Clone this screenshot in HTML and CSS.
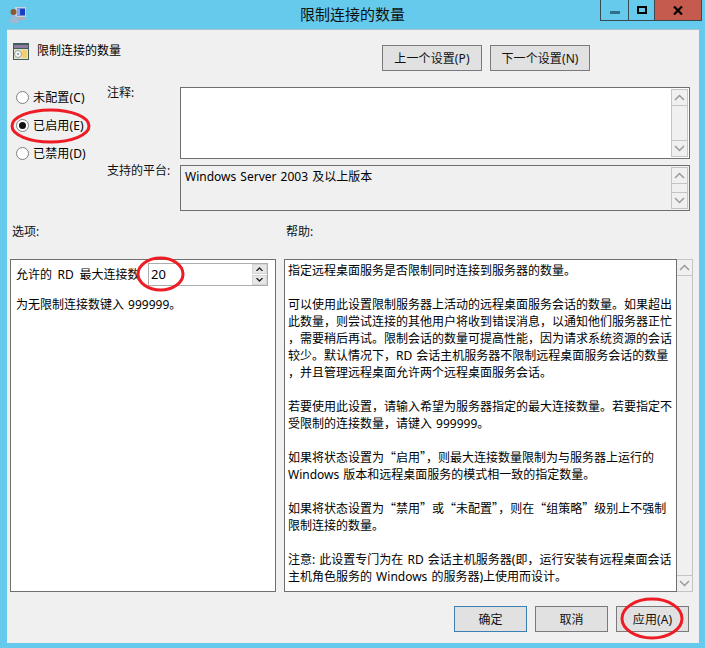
FILE: index.html
```html
<!DOCTYPE html>
<html lang="zh-CN">
<head>
<meta charset="utf-8">
<title>限制连接的数量</title>
<link rel="stylesheet" href="styles.css">
</head>
<body>
<div class="window">
  <header class="titlebar">
    <svg class="app-icon" width="18" height="18" viewBox="0 0 18 18">
      <rect x="6" y="1" width="11" height="10" fill="#c9d3de"/>
      <rect x="8" y="2.500" width="8" height="7" fill="#1b3fc4"/>
      <rect x="8" y="2.500" width="3" height="7" fill="#7fa6ee"/>
      <path d="M9 11h7l1 3H9z" fill="#a7b1b8"/>
      <circle cx="4.500" cy="6" r="3" fill="#8a5a2c"/>
      <path d="M1 17c0-6 2-8 4-8s4 2 5 8z" fill="#9fb8d6"/>
    </svg>
    <h1 class="window-title">限制连接的数量</h1>
    <div class="caption-buttons">
      <div class="cap cap-min"><span class="min-glyph"></span></div>
      <div class="cap cap-max"><span class="max-glyph"></span></div>
      <div class="cap cap-close">
        <svg width="10" height="9" viewBox="0 0 10 9"><path d="M1 0.500 9 8.500M9 0.500 1 8.500" stroke="#000" stroke-width="2.200"/></svg>
      </div>
    </div>
  </header>

  <main class="client">
    <div class="head-row">
      <svg class="setting-icon" width="16" height="17" viewBox="0 0 16 17">
        <rect x="0" y="0" width="16" height="17" fill="#3f5f5c"/>
        <rect x="1" y="2" width="14" height="3" fill="#8d7ba0"/>
        <rect x="1" y="6" width="14" height="10" fill="#e6e2c6"/>
        <rect x="9" y="7" width="5" height="8" fill="#f2cf73"/>
        <circle cx="5" cy="11" r="3.500" fill="#f7f7f7" stroke="#8aa3a0"/>
        <circle cx="5" cy="11" r="1" fill="#7c8f8d"/>
      </svg>
      <div class="setting-name">限制连接的数量</div>
      <div class="nav-buttons">
        <div class="btn btn-nav">上一个设置(P)</div>
        <div class="btn btn-nav">下一个设置(N)</div>
      </div>
    </div>

    <div class="state-row">
      <div class="radios">
        <div class="radio-line"><span class="radio"></span>未配置(C)</div>
        <div class="radio-line"><span class="radio radio-on"></span>已启用(E)</div>
        <div class="radio-line"><span class="radio"></span>已禁用(D)</div>
      </div>
      <div class="fields">
        <div class="field-label label-note">注释:</div>
        <div class="box box-note">
          <div class="box-text"></div>
          <div class="scroll">
            <div class="scroll-btn"><svg width="11" height="7" viewBox="0 0 11 7"><path d="M1 6 5.500 1.500 10 6" class="chev"/></svg></div>
            <div class="scroll-btn"><svg width="11" height="7" viewBox="0 0 11 7"><path d="M1 1 5.500 5.500 10 1" class="chev"/></svg></div>
          </div>
        </div>
        <div class="field-label label-platform">支持的平台:</div>
        <div class="box box-platform">
          <div class="box-text">Windows Server 2003 及以上版本</div>
          <div class="scroll">
            <div class="scroll-btn"><svg width="11" height="7" viewBox="0 0 11 7"><path d="M1 6 5.500 1.500 10 6" class="chev"/></svg></div>
            <div class="scroll-btn"><svg width="11" height="7" viewBox="0 0 11 7"><path d="M1 1 5.500 5.500 10 1" class="chev"/></svg></div>
          </div>
        </div>
      </div>
    </div>

    <div class="section-labels">
      <div class="section-options">选项:</div>
      <div>帮助:</div>
    </div>

    <div class="panels">
      <section class="options-panel">
        <div class="option-line">
          <span class="option-label">允许的 RD 最大连接数</span>
          <div class="spin">
            <span class="spin-value">20</span>
            <div class="spin-btns">
              <div class="spin-btn"><svg width="7" height="4" viewBox="0 0 7 4"><path d="M0.500 4 3.500 1 6.500 4" class="spin-chev"/></svg></div>
              <div class="spin-btn"><svg width="7" height="4" viewBox="0 0 7 4"><path d="M0.500 0 3.500 3 6.500 0" class="spin-chev"/></svg></div>
            </div>
          </div>
        </div>
        <div class="option-hint">为无限制连接数键入 999999。</div>
      </section>
      <section class="help-panel">
        <div class="help-text">指定远程桌面服务是否限制同时连接到服务器的数量。<br><br>可以使用此设置限制服务器上活动的远程桌面服务会话的数量。如果超出<br>此数量，则尝试连接的其他用户将收到错误消息，以通知他们服务器正忙<br>，需要稍后再试。限制会话的数量可提高性能，因为请求系统资源的会话<br>较少。默认情况下，RD 会话主机服务器不限制远程桌面服务会话的数量<br>，并且管理远程桌面允许两个远程桌面服务会话。<br><br>若要使用此设置，请输入希望为服务器指定的最大连接数量。若要指定不<br>受限制的连接数量，请键入 999999。<br><br>如果将状态设置为<span class="cjk-quote">“</span>启用<span class="cjk-quote">”</span>，则最大连接数量限制为与服务器上运行的<br>Windows 版本和远程桌面服务的模式相一致的指定数量。<br><br>如果将状态设置为<span class="cjk-quote">“</span>禁用<span class="cjk-quote">”</span>或<span class="cjk-quote">“</span>未配置<span class="cjk-quote">”</span>，则在<span class="cjk-quote">“</span>组策略<span class="cjk-quote">”</span>级别上不强制<br>限制连接的数量。<br><br>注意: 此设置专门为在 RD 会话主机服务器(即，运行安装有远程桌面会话<br>主机角色服务的 Windows 的服务器)上使用而设计。</div>
        <div class="help-scroll">
          <div class="scroll-btn"><svg width="11" height="7" viewBox="0 0 11 7"><path d="M1 6 5.500 1.500 10 6" class="chev"/></svg></div>
          <div class="scroll-btn"><svg width="11" height="7" viewBox="0 0 11 7"><path d="M1 1 5.500 5.500 10 1" class="chev"/></svg></div>
        </div>
      </section>
    </div>

    <div class="footer">
      <div class="btn btn-foot btn-default">确定</div>
      <div class="btn btn-foot">取消</div>
      <div class="btn btn-foot">应用(A)</div>
    </div>
  </main>
</div>

<svg class="annotations" width="705" height="648" viewBox="0 0 705 648">
  <ellipse cx="50.500" cy="126" rx="38.500" ry="16" class="mark"/>
  <ellipse cx="160.500" cy="274" rx="22.500" ry="16" class="mark"/>
  <ellipse cx="652" cy="618.500" rx="30" ry="19.500" class="mark"/>
</svg>
</body>
</html>
```

FILE: styles.css
```css
* { box-sizing: border-box; }

html, body {
  margin: 0;
  padding: 0;
  width: 705px;
  height: 648px;
  overflow: hidden;
}

body {
  position: relative;
  background: #65caec;
  color: #000;
  font-family: "Noto Sans", "Noto Sans CJK SC", sans-serif;
  font-size: 12px;
  line-height: 17px;
  word-spacing: 1px;
}

.window {
  display: flex;
  flex-direction: column;
  height: 648px;
}

.titlebar {
  position: relative;
  height: 29px;
  flex: none;
}

.app-icon {
  position: absolute;
  left: 9px;
  top: 6px;
}

.window-title {
  margin: 0;
  font-size: 15px;
  font-weight: 400;
  line-height: 29px;
  text-align: center;
  color: #111;
}

.caption-buttons {
  position: absolute;
  top: 0;
  left: 600px;
  width: 102px;
  height: 21px;
  display: flex;
  border: 1px solid #3a4a52;
  border-top: 0;
}

.cap {
  display: flex;
  align-items: center;
  justify-content: center;
  height: 20px;
}

.cap-min { width: 28px; border-right: 1px solid #3a4a52; }
.cap-max { width: 26px; border-right: 1px solid #3a4a52; }
.cap-close { flex: 1; background: #c55a4f; }

.min-glyph {
  display: block;
  width: 10px;
  height: 3px;
  margin-top: 5px;
  background: #2f6f88;
}

.max-glyph {
  display: block;
  width: 10px;
  height: 8px;
  border: 2px solid #000;
}

.client {
  margin: 0 6px 0 7px;
  height: 614px;
  background: #f0f0f0;
  border-top: 1px solid #a9c4cf;
  padding-top: 15px;
}

.head-row {
  display: flex;
  height: 26px;
  padding-left: 6px;
}

.setting-icon {
  margin-top: -2px;
  flex: none;
}

.setting-name {
  margin-left: 8px;
  margin-top: -3px;
  line-height: 17px;
}

.nav-buttons {
  display: flex;
  gap: 8px;
  margin-left: auto;
  margin-right: 109px;
}

.btn {
  display: flex;
  align-items: center;
  justify-content: center;
  background: #e1e1e1;
  border: 1px solid #7a7a7a;
  height: 26px;
  color: #111;
  letter-spacing: 0.1px;
}

.btn-nav { width: 100px; }
.btn-foot { width: 73px; }
.btn-default { border-color: #3c7fb1; }

.state-row {
  display: flex;
  margin-top: 12px;
  height: 128px;
}

.radios {
  width: 100px;
  padding-left: 9px;
}

.radio-line {
  display: flex;
  align-items: center;
  height: 28px;
  letter-spacing: 0.15px;
}

.radio {
  width: 13px;
  height: 13px;
  border: 1px solid #808080;
  border-radius: 50%;
  background: #fff;
  margin-right: 4px;
  display: flex;
  align-items: center;
  justify-content: center;
}

.radio-on::after {
  content: "";
  width: 7px;
  height: 7px;
  border-radius: 50%;
  background: #111;
}

.fields {
  display: grid;
  grid-template-columns: 73px 510px;
  grid-template-rows: 72px 46px;
  row-gap: 6px;
  margin-top: 4px;
}

.field-label { color: #111; }
.label-note { margin-top: -3px; }
.label-platform { margin-top: -3px; }

.box {
  display: flex;
  border: 1px solid #6f6f6f;
  padding: 1px;
}

.box-note { background: #fff; }
.box-platform { background: #f0f0f0; }

.box-text {
  flex: 1;
  padding: 1px 3px;
}

.scroll {
  flex: none;
  width: 17px;
  display: flex;
  flex-direction: column;
  justify-content: space-between;
  border: 1px solid #c4c4c4;
  background: #f0f0f0;
}

.scroll-btn {
  height: 16px;
  display: flex;
  align-items: center;
  justify-content: center;
  background: #f0f0f0;
}

.scroll-btn:first-child { border-bottom: 1px solid #c4c4c4; }
.scroll-btn:last-child { border-top: 1px solid #c4c4c4; }

.chev {
  fill: none;
  stroke: #9a9a9a;
  stroke-width: 1.500;
}

.section-labels {
  display: flex;
  margin-top: 12px;
  height: 36px;
  padding-left: 5px;
  color: #111;
}

.section-options { width: 274px; }

.panels {
  display: flex;
  height: 333px;
  padding-left: 3px;
  gap: 8px;
}

.options-panel {
  width: 266px;
  background: #fff;
  border: 1px solid #6f6f6f;
  padding: 3px 5px;
}

.option-line {
  display: flex;
  align-items: center;
  height: 23px;
}

.option-label {
  width: 132px;
  flex: none;
  word-spacing: 2.500px;
}

.spin {
  width: 120px;
  height: 23px;
  display: flex;
  border: 1px solid #abadb3;
  background: #fff;
}

.spin-value {
  flex: 1;
  font-size: 13px;
  line-height: 21px;
  padding-left: 2px;
}

.spin-btns {
  width: 15px;
  display: flex;
  flex-direction: column;
  gap: 1px;
}

.spin-btn {
  flex: 1;
  display: flex;
  align-items: center;
  justify-content: center;
  background: #e6e6e6;
  border: 1px solid #d4d4d4;
}

.spin-chev {
  fill: none;
  stroke: #222;
  stroke-width: 1.300;
}

.option-hint { margin-top: 10px; }

.help-panel {
  display: flex;
  width: 409px;
  height: 333px;
}

.help-text {
  width: 393px;
  background: #fff;
  border: 1px solid #6f6f6f;
  padding: 2px 0 0 3px;
  white-space: nowrap;
  overflow: hidden;
}

.cjk-quote {
  font-family: "Noto Sans CJK SC", sans-serif;
  line-height: 1;
}

.help-scroll {
  width: 16px;
  display: flex;
  flex-direction: column;
  justify-content: space-between;
  background: #f0f0f0;
  border: 1px solid #c4c4c4;
  border-left: 0;
}

.footer {
  display: flex;
  justify-content: flex-end;
  gap: 8px;
  margin-top: 14px;
  padding-right: 10px;
}

.annotations {
  position: absolute;
  left: 0;
  top: 0;
  pointer-events: none;
}

.mark {
  fill: none;
  stroke: #ee1c25;
  stroke-width: 3;
}
```
